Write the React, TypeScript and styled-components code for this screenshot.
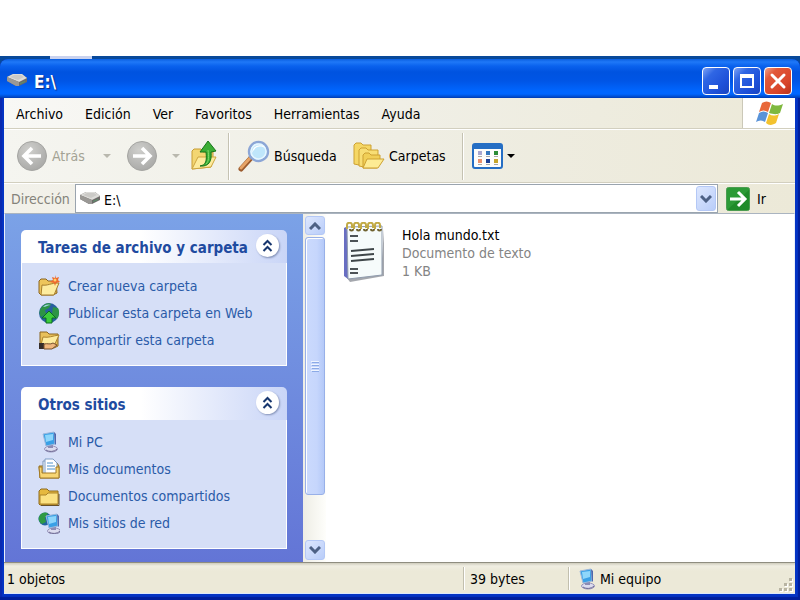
import React from "react";
import styled, { createGlobalStyle } from "styled-components";

const GlobalStyle = createGlobalStyle`
  * { box-sizing: border-box; }
  html, body { margin: 0; padding: 0; background: #fff; }
  body, button, input {
    font-family: "DejaVu Sans Condensed", "DejaVu Sans", sans-serif;
    font-size: 14px;
    line-height: 18px;
    color: #000;
  }
  button { border: 0; padding: 0; margin: 0; background: none; cursor: default; }
  svg { display: block; flex: none; }
`;

/* ---------- desktop and window frame ---------- */

const Page = styled.div`
  display: flex;
  flex-direction: column;
  min-height: 100vh;
  padding-top: 56px;
`;

const Desktop = styled.div`
  display: flex;
  flex-direction: column;
  flex: 1;
  background: #08499a;
`;

const DesktopEdge = styled.div`
  display: flex;
  height: 3px;
  padding-left: 50px;
`;

const BackgroundTab = styled.div`
  width: 42px;
  background: #c9d2ef;
`;

const Window = styled.section`
  display: flex;
  flex-direction: column;
  flex: 1;
  padding: 0 5px 6px 4px;
  border-radius: 8px 8px 0 0;
  background: #0434c4;
  box-shadow: inset -2px -3px 1px #001f9c, inset 2px 0 1px #0a2ab0;
`;

const TitleBar = styled.header`
  display: flex;
  align-items: center;
  gap: 3px;
  height: 39px;
  margin: 0 -5px 0 -4px;
  padding: 4px 8px 0 6px;
  border-radius: 8px 8px 0 0;
  background: linear-gradient(
    #0a5fe0 0, #1f78f8 3px, #0a62ee 7px, #0053e0 13px, #0055e6 22px,
    #0066ff 32px, #0066ff 35px, #0049c8 38px, #0038b0 39px
  );
`;

const Title = styled.h1`
  flex: 1;
  margin: 0;
  padding: 2px 0 0 3px;
  font-size: 17px;
  line-height: 20px;
  font-weight: bold;
  color: #fff;
  text-shadow: 1px 1px 1px #0a2a80;
`;

const CaptionButtons = styled.div`
  display: flex;
  gap: 3px;
`;

const CaptionButton = styled.button<{ $danger?: boolean }>`
  display: grid;
  place-items: center;
  width: 28px;
  height: 28px;
  border: 1px solid #fff;
  border-radius: 4px;
  background: ${(p) =>
    p.$danger
      ? "linear-gradient(135deg, #f0a088 0, #e2593a 25%, #d8452a 70%, #b8321c 100%)"
      : "linear-gradient(135deg, #7fa4f6 0, #2f66e4 28%, #1e50d8 70%, #1a44c0 100%)"};
`;

/* ---------- menu bar ---------- */

const MenuBar = styled.div`
  display: flex;
  height: 31px;
  background: linear-gradient(90deg, #f8f8f5 0, #f0efe6 50%, #ece9d8 100%);
  border-bottom: 1px solid #d2cfbf;
`;

const Menus = styled.nav`
  display: flex;
  flex: 1;
  align-items: center;
  gap: 22px;
  padding: 1px 0 0 12px;
`;

const LogoBox = styled.div`
  display: grid;
  place-items: center;
  width: 53px;
  padding-left: 2px;
  background: #fff;
  border-left: 1px solid #cbc8b8;
`;

/* ---------- toolbar ---------- */

const Toolbar = styled.div`
  display: flex;
  align-items: center;
  height: 54px;
  padding-left: 12px;
  border-top: 1px solid #fff;
  border-bottom: 1px solid #d2cfbf;
  background: linear-gradient(90deg, #f5f5f0 0, #efeee4 50%, #ece9d8 100%);
`;

const ToolButton = styled.button<{ $muted?: boolean; $width: number }>`
  display: flex;
  align-items: center;
  gap: 4px;
  width: ${(p) => p.$width}px;
  flex: none;
  color: ${(p) => (p.$muted ? "#a3a294" : "#000")};
`;

const Spacer = styled.span`
  flex: 1;
`;

const Divider = styled.div`
  width: 2px;
  height: 47px;
  margin-right: 8px;
  background: #c5c2b2;
  border-right: 1px solid #fff;
`;

/* ---------- address bar ---------- */

const AddressBar = styled.form`
  display: flex;
  align-items: center;
  height: 30px;
  border-top: 1px solid #fff;
  background: linear-gradient(90deg, #f2f1ea 0, #ece9d8 100%);
`;

const AddressLabel = styled.label`
  width: 71px;
  padding-left: 7px;
  color: #84837a;
`;

const AddressField = styled.div`
  display: flex;
  align-items: center;
  flex: 1;
  height: 29px;
  padding: 0 1px 0 3px;
  gap: 3px;
  border: 1px solid #9aa4ae;
  background: #fff;
`;

const AddressInput = styled.input`
  flex: 1;
  min-width: 0;
  padding: 2px 0 0;
  border: 0;
  outline: 0;
  background: transparent;
`;

const ScrollKey = styled.button<{ $height: number }>`
  display: grid;
  place-items: center;
  flex: none;
  width: 20px;
  height: ${(p) => p.$height}px;
  border: 1px solid #b4c8f6;
  border-radius: 3px;
  background: linear-gradient(135deg, #dde7fe, #b9cdf9);
`;

const GoButton = styled.button`
  display: flex;
  align-items: center;
  gap: 7px;
  width: 77px;
  padding-left: 8px;
`;

/* ---------- body ---------- */

const Body = styled.div`
  display: flex;
  flex: 1;
  background: #fff;
  border-left: 1px solid #e9effa;
  border-right: 1px solid #e9effa;
  border-top: 1px solid #aab4c0;
`;

const TaskPane = styled.aside`
  display: flex;
  flex-direction: column;
  gap: 21px;
  width: 298px;
  padding: 16px 16px 13px;
  background: linear-gradient(#7ba2e7, #6375d6);
`;

const TaskBox = styled.section`
  color: #215dc6;
`;

const TaskHeader = styled.header`
  display: flex;
  align-items: center;
  justify-content: space-between;
  height: 33px;
  padding: 0 8px 2px 17px;
  border-radius: 5px 5px 0 0;
  background: linear-gradient(90deg, #fff 0, #fff 45%, #c9d5f7 100%);
`;

const TaskTitle = styled.h2`
  margin: 0;
  padding-top: 5px;
  font-size: 15px;
  line-height: 18px;
  white-space: nowrap;
  color: #1f4ba0;
`;

const CollapseButton = styled.button`
  display: grid;
  place-items: center;
  width: 23px;
  height: 23px;
  border-radius: 50%;
  background: #fff;
  box-shadow: 1px 1px 2px #8593b8;
`;

const TaskList = styled.ul<{ $tall?: boolean }>`
  margin: 0;
  padding: ${(p) => (p.$tall ? "8px 16px 12px" : "9px 16px 12px")};
  list-style: none;
  background: #d6dff7;
  border: 1px solid #fff;
  border-top: 0;
`;

const TaskLink = styled.a`
  display: flex;
  align-items: center;
  gap: 8px;
  height: 27px;
  color: #2a5ba8;
  text-decoration: none;
  white-space: nowrap;
`;

const ScrollBar = styled.div`
  display: flex;
  flex-direction: column;
  align-items: center;
  width: 23px;
  padding: 2px 1px;
  background: linear-gradient(90deg, #eeede5, #fefefb);
`;

const ScrollTrack = styled.div`
  display: flex;
  flex: 1;
  flex-direction: column;
  padding: 2px 0 45px;
`;

const ScrollThumb = styled.div`
  display: grid;
  place-items: center;
  flex: 1;
  width: 20px;
  border: 1px solid #98b0e8;
  border-radius: 3px;
  background: linear-gradient(90deg, #cbdafd, #c6d6fc 60%, #b4c9f8);
  box-shadow: inset 1px 1px 0 #fff;
`;

const FileArea = styled.main`
  flex: 1;
  padding: 8px 17px;
`;

const FileItem = styled.a`
  display: inline-flex;
  gap: 17px;
  color: #000;
  text-decoration: none;
`;

const FileText = styled.span`
  display: flex;
  flex-direction: column;
  padding-top: 4px;
  line-height: 18px;
`;

const FileMeta = styled.span`
  color: #848484;
`;

/* ---------- status bar ---------- */

const StatusBar = styled.footer`
  display: flex;
  align-items: center;
  height: 32px;
  background: linear-gradient(#cfccbd 0, #f0eee2 3px, #ece9d8 8px, #ece9d8 100%);
  border-top: 1px solid #8f8d80;
  border-bottom: 1px solid #dce8fa;
`;

const StatusCell = styled.div<{ $width?: number }>`
  display: flex;
  align-items: center;
  gap: 3px;
  flex: ${(p) => (p.$width ? "none" : "1")};
  width: ${(p) => (p.$width ? `${p.$width}px` : "auto")};
  height: 24px;
  padding: 2px 0 0 3px;
`;

const StatusSplit = styled.div`
  width: 2px;
  height: 23px;
  margin-right: 2px;
  background: #c2bfae;
  border-right: 1px solid #fff;
`;

const Grip = styled.div`
  display: flex;
  align-self: flex-end;
  padding: 0 2px 1px 0;
`;

/* ---------- icons ---------- */

const DriveIcon = () => (
  <svg width="22" height="18" viewBox="0 0 22 18">
    <path d="M1 5 7 2h9l5 4v4l-8 4h-3L1 9z" fill="#6d6b69" />
    <path d="M1 5 7 2h9l5 4-8 4z" fill="#dddcd9" />
    <path d="m4 5 4-2h7l3 2-6 3z" fill="#cbcac7" />
    <path d="m1 5 12 5v4h-3L1 9z" fill="#9a9895" />
    <path d="m14 11 5-2v1l-5 2z" fill="#5b946c" />
  </svg>
);

const MinimizeIcon = () => (
  <svg width="22" height="22"><path d="M4 15h9v4H4z" fill="#fff" /></svg>
);
const MaximizeIcon = () => (
  <svg width="22" height="22">
    <path d="M4 4h14v14H4zM6 8v8h10V8z" fillRule="evenodd" fill="#fff" />
  </svg>
);
const CloseIcon = () => (
  <svg width="20" height="20"><path d="m4 4 12 12M16 4 4 16" stroke="#fff" strokeWidth="3" strokeLinecap="round" /></svg>
);

const WindowsFlag = () => (
  <svg width="28" height="27" viewBox="0 0 28 27">
    <path d="M6 3c3-2 6-2 9 0l-3 9c-3-2-6-2-9 0z" fill="#e8683a" />
    <path d="M16 4c3 2 6 2 11 0l-3 9c-4 2-7 1-11 0z" fill="#7fb83e" />
    <path d="M3 13c3-2 6-2 9 0l-3 9c-3-2-6-2-9 0z" fill="#5a93d8" />
    <path d="M13 14c3 2 6 2 10 0l-3 9c-3 2-7 3-10 0z" fill="#f3c22e" />
  </svg>
);

const RoundArrow = ({ flip }: { flip?: boolean }) => (
  <svg width="32" height="32" viewBox="0 0 32 32">
    <defs>
      <radialGradient id={flip ? "fw" : "bk"} cx=".4" cy=".3" r=".75">
        <stop offset="0" stopColor="#cfcfcc" />
        <stop offset="1" stopColor="#a8a8a6" />
      </radialGradient>
    </defs>
    <circle cx="16" cy="16" r="14.5" fill={flip ? "url(#fw)" : "url(#bk)"} stroke="#a5a5a2" />
    <g transform={flip ? "translate(32 0) scale(-1 1)" : undefined}>
      <path d="M25 16H9M16 8l-8 8 8 8" fill="none" stroke="#fff" strokeWidth="3.6" />
    </g>
  </svg>
);

const Caret = ({ color }: { color: string }) => (
  <svg width="8" height="4"><path d="M0 0h8L4 4z" fill={color} /></svg>
);

const UpFolderIcon = () => (
  <svg width="28" height="32" viewBox="0 0 28 32">
    <path d="M2 29V11l2-2h7l2 3h10v6l-2 9z" fill="#f3d672" stroke="#c79c33" />
    <path d="m2 29 6-12h18l-5 10z" fill="#fdeb9c" stroke="#cda540" />
    <path d="M10 26c6-1 7-5 6-14h-6l8-11 8 10-5 1c1 9-2 15-11 14z" fill="#3bad35" stroke="#17751a" />
    <path d="M18 10c1 7 1 11-2 14" stroke="#83d96c" fill="none" />
  </svg>
);

const SearchIcon = () => (
  <svg width="32" height="32" viewBox="0 0 32 32">
    <path d="m3 29 10-11" stroke="#9b5a2c" strokeWidth="5" strokeLinecap="round" />
    <path d="m3 28 10-11" stroke="#e6a467" strokeWidth="3" strokeLinecap="round" />
    <path d="m12 18 2-2" stroke="#7a8dac" strokeWidth="4" />
    <circle cx="20.500" cy="11.500" r="9.500" fill="#bfe6fb" stroke="#8ca6d6" strokeWidth="2.400" />
    <circle cx="20.500" cy="11.500" r="7.500" fill="none" stroke="#e6f6ff" strokeWidth="1.500" />
    <path d="M14 13c3-6 7-8 13-5-1-4-12-5-13 5" fill="#fff" />
  </svg>
);

const FoldersIcon = () => (
  <svg width="32" height="28" viewBox="0 0 32 28" stroke="#cda132">
    <path d="M1 22V3l2-2h5l2 2h8v8L6 23z" fill="#f5d765" />
    <path d="M6 24V8l2-2h5l2 2h10v8L11 25z" fill="#f8de74" />
    <path d="M10 26V13l2-2h4l2 2h9v5l-3 8z" fill="#f1cf57" />
    <path d="m10 26 4-9h17l-6 9z" fill="#fdec94" />
  </svg>
);

const ViewsIcon = () => (
  <svg width="31" height="26" viewBox="0 0 31 26">
    <rect x="1" y="1" width="29" height="24" rx="2" fill="#fdfdfb" stroke="#256ec4" strokeWidth="2" />
    <path d="M1 1h29v5H1z" fill="#256ec4" />
    {[
      [6, 8, "#a9a8d0"], [14, 8, "#3577bd"], [22, 8, "#2c8c34"],
      [6, 16, "#ea8f6a"], [14, 16, "#1a3f96"], [22, 16, "#c6a62c"],
    ].map(([x, y, c]) => (
      <g key={`${x}-${y}`}>
        <rect x={x} y={y} width="4" height="4" fill={c as string} />
        <rect x={x} y={Number(y) + 5} width="4" height="1" fill="#a7a7a7" />
      </g>
    ))}
  </svg>
);

const Chevron = ({ up }: { up?: boolean }) => (
  <svg width="12" height="8" viewBox="0 0 12 8">
    <path d={up ? "m1 7 5-5 5 5" : "m1 1 5 5 5-5"} fill="none" stroke="#4d6185" strokeWidth="3" />
  </svg>
);

const GoIcon = () => (
  <svg width="24" height="24" viewBox="0 0 24 24">
    <rect x=".5" y=".5" width="23" height="23" rx="2" fill="#2c9a36" stroke="#4b9c50" />
    <path d="M1 23h22V3z" fill="#178222" opacity=".6" />
    <path d="M4 12h14M12 5l7 7-7 7" fill="none" stroke="#fff" strokeWidth="3" />
  </svg>
);

const DoubleChevron = () => (
  <svg width="11" height="13" viewBox="0 0 11 13">
    <path d="m1.500 6 4-4 4 4M1.500 12l4-4 4 4" fill="none" stroke="#17366e" strokeWidth="2" />
  </svg>
);

const FolderShape = () => (
  <>
    <path d="M1 19V6l2-2h6l2 2h9v13l-2 1H2z" fill="#e5b83f" stroke="#8f6a1c" />
    <path d="M2 10h6l2-2h10v11H2z" fill="#fbe182" stroke="#ac8329" />
    <path d="M3 20.500h18V9" fill="none" stroke="#66502b" />
  </>
);

const NewFolderIcon = () => (
  <svg width="22" height="22" viewBox="0 0 22 22">
    <path d="M1 18V6l2-2h5l2 2h8l1 12-4 2H3z" fill="#edc55b" stroke="#8b6420" />
    <path d="m3 20 1-10c6 1 8-2 17-2l-5 12z" fill="#fdec9f" stroke="#a77e2c" />
    <path d="m17 0 1 3 3-1-1 3 2 2-4 1-1 3-1-3-4-1 3-2-1-3 3 1z" fill="#ee6a2d" />
    <circle cx="17" cy="5" r="1.500" fill="#ffcf6a" />
  </svg>
);

const PublishIcon = () => (
  <svg width="22" height="22" viewBox="0 0 22 22">
    <circle cx="11" cy="11" r="10" fill="#285f9f" />
    <path d="M3 6c3-4 7-6 10-4l-2 4-4 2 1 4-5 3c-2-3-2-6 0-9zM15 5l5 1c2 4 1 8-1 11l-5-5z" fill="#2c9445" />
    <path d="M5 5c2-3 6-3 8-2-3 0-5 2-8 2z" fill="#9ed1df" />
    <path d="m11 9 7 7h-4v5H8v-5H4z" fill="#3dcc3c" stroke="#0b6e1e" />
  </svg>
);

const ShareFolderIcon = () => (
  <svg width="22" height="22" viewBox="0 0 22 22">
    <path d="M2 18V3h7l2 2h9v12l-4 2z" fill="#e8c05a" stroke="#8b6420" />
    <path d="m3 16 2-8c6 1 9-1 16-2l-5 11z" fill="#fdeb9d" stroke="#ad842d" />
    <path d="M1 14h5v6H1z" fill="#342c2a" />
    <path d="M6 15c4-1 6 1 9-1l4 2-5 4H6z" fill="#efb67d" stroke="#76502d" />
  </svg>
);

const ComputerShape = () => (
  <>
    <ellipse cx="13" cy="18" rx="6.500" ry="3" fill="#dcdcef" stroke="#9894ba" />
    <path d="M8 19c3 2 8 2 11-1" fill="none" stroke="#6b6792" />
    <path d="M10 13h5v4h-5z" fill="#8c8cb4" />
    <path d="m5 3 11-2 1 12-9 2z" fill="#39a0e6" stroke="#9db8dc" />
    <path d="m7 4 8-1v6l-7 2z" fill="#8ed6fb" />
    <path d="m16 1 2 2v10l-1 1z" fill="#4f68ac" />
  </>
);

const ComputerIcon = () => (
  <svg width="22" height="22" viewBox="0 0 22 22"><ComputerShape /></svg>
);

const DocumentsIcon = () => (
  <svg width="22" height="22" viewBox="0 0 22 22">
    <path d="M1 8h4l2-3h12l2 3v12H2z" fill="#e6bd4c" stroke="#8f6a1c" />
    <path d="M5 3h9l4 4v10H5z" fill="#f6fbff" stroke="#7f97b8" />
    <path d="M7 1h8l4 4v11H7z" fill="#fff" stroke="#7f9cc4" />
    <path d="M9 5h6M9 8h8M9 11h8" stroke="#4f92cc" />
    <path d="M1 9h3v6h14V9h3v11H2z" fill="#f7d573" stroke="#a37a26" />
  </svg>
);

const SharedDocsIcon = () => (
  <svg width="22" height="22" viewBox="0 0 22 22"><FolderShape /></svg>
);

const NetworkIcon = () => (
  <svg width="22" height="22" viewBox="0 0 22 22">
    <circle cx="7" cy="7" r="6.500" fill="#2262a0" />
    <path d="M2 3c2-3 6-3 8-2L7 6l1 4-4 2C0 9 0 6 2 3z" fill="#2f9a45" />
    <g transform="translate(3 1)"><ComputerShape /></g>
  </svg>
);

const NotepadIcon = () => (
  <svg width="42" height="60" viewBox="0 0 42 60">
    <path d="M4 56 38 51l3-44v47L7 60z" fill="#8d9199" opacity=".8" />
    <path d="m1 6 4-2v53l-4-3z" fill="#686ec2" />
    <path d="m4 5 35-1v49L5 57z" fill="#f6fbfb" stroke="#8f9bad" />
    <path d="M7 14h8M7 19h8M7 47h8M7 51h8" stroke="#4d5356" strokeWidth="2" />
    <path d="m8 29 23-2M8 34l23-2M8 39l23-2" stroke="#3f4649" strokeWidth="2" />
    {[4, 11, 18, 25, 32].map((x) => (
      <g key={x}>
        <path d={`M${x} 7V3c0-3 5-3 5 0v3`} fill="none" stroke="#c1aa46" strokeWidth="2" />
        <path d={`M${x + 3} 7c0 2 3 2 3 0`} fill="none" stroke="#6f6230" strokeWidth="2" />
      </g>
    ))}
  </svg>
);

const ThumbGrip = () => (
  <svg width="8" height="12"><path d="M0 1.500h8M0 4.500h8M0 7.500h8M0 10.500h8" stroke="#eef4fe" /><path d="M1 2.500h8M1 5.500h8M1 8.500h8M1 11.500h8" stroke="#8caae6" /></svg>
);

const ResizeGrip = () => (
  <svg width="14" height="14">
    {[[10, 0], [10, 5], [10, 10], [5, 5], [5, 10], [0, 10]].map(([x, y]) => (
      <g key={`${x}-${y}`}>
        <rect x={x + 1} y={y + 1} width="3" height="3" fill="#fff" />
        <rect x={x} y={y} width="3" height="3" fill="#b8b4a2" />
      </g>
    ))}
  </svg>
);

/* ---------- content ---------- */

const menus = ["Archivo", "Edición", "Ver", "Favoritos", "Herramientas", "Ayuda"];

const groups = [
  {
    title: "Tareas de archivo y carpeta",
    items: [
      { label: "Crear nueva carpeta", Icon: NewFolderIcon },
      { label: "Publicar esta carpeta en Web", Icon: PublishIcon },
      { label: "Compartir esta carpeta", Icon: ShareFolderIcon },
    ],
  },
  {
    title: "Otros sitios",
    items: [
      { label: "Mi PC", Icon: ComputerIcon },
      { label: "Mis documentos", Icon: DocumentsIcon },
      { label: "Documentos compartidos", Icon: SharedDocsIcon },
      { label: "Mis sitios de red", Icon: NetworkIcon },
    ],
  },
];

export default function App() {
  return (
    <Page>
      <GlobalStyle />
      <Desktop>
        <DesktopEdge><BackgroundTab /></DesktopEdge>
        <Window>
          <TitleBar>
            <DriveIcon />
            <Title>E:\</Title>
            <CaptionButtons>
              <CaptionButton aria-label="Minimizar"><MinimizeIcon /></CaptionButton>
              <CaptionButton aria-label="Maximizar"><MaximizeIcon /></CaptionButton>
              <CaptionButton aria-label="Cerrar" $danger><CloseIcon /></CaptionButton>
            </CaptionButtons>
          </TitleBar>

          <MenuBar>
            <Menus>
              {menus.map((m) => <button key={m}>{m}</button>)}
            </Menus>
            <LogoBox><WindowsFlag /></LogoBox>
          </MenuBar>

          <Toolbar>
            <ToolButton $width={110} $muted>
              <RoundArrow />Atrás<Spacer /><Caret color="#b9b8ae" /><Spacer />
            </ToolButton>
            <ToolButton $width={64} $muted aria-label="Adelante">
              <RoundArrow flip /><Spacer /><Caret color="#b9b8ae" /><Spacer />
            </ToolButton>
            <ToolButton $width={38} aria-label="Arriba"><UpFolderIcon /></ToolButton>
            <Divider />
            <ToolButton $width={115}><SearchIcon />Búsqueda</ToolButton>
            <ToolButton $width={109}><FoldersIcon />Carpetas</ToolButton>
            <Divider />
            <ToolButton $width={48} aria-label="Vistas"><ViewsIcon /><Caret color="#000" /></ToolButton>
          </Toolbar>

          <AddressBar onSubmit={(e) => e.preventDefault()}>
            <AddressLabel htmlFor="address">Dirección</AddressLabel>
            <AddressField>
              <DriveIcon />
              <AddressInput id="address" defaultValue="E:\" />
              <ScrollKey type="button" $height={25} aria-label="Mostrar direcciones"><Chevron /></ScrollKey>
            </AddressField>
            <GoButton type="submit"><GoIcon />Ir</GoButton>
          </AddressBar>

          <Body>
            <TaskPane>
              {groups.map((g) => (
                <TaskBox key={g.title}>
                  <TaskHeader>
                    <TaskTitle>{g.title}</TaskTitle>
                    <CollapseButton aria-label={`Contraer ${g.title}`}><DoubleChevron /></CollapseButton>
                  </TaskHeader>
                  <TaskList $tall={g.items.length > 3}>
                    {g.items.map(({ label, Icon }) => (
                      <li key={label}><TaskLink href="#"><Icon />{label}</TaskLink></li>
                    ))}
                  </TaskList>
                </TaskBox>
              ))}
            </TaskPane>
            <ScrollBar>
              <ScrollKey $height={19} aria-label="Subir"><Chevron up /></ScrollKey>
              <ScrollTrack><ScrollThumb><ThumbGrip /></ScrollThumb></ScrollTrack>
              <ScrollKey $height={20} aria-label="Bajar"><Chevron /></ScrollKey>
            </ScrollBar>
            <FileArea>
              <FileItem href="#">
                <NotepadIcon />
                <FileText>
                  <span>Hola mundo.txt</span>
                  <FileMeta>Documento de texto</FileMeta>
                  <FileMeta>1 KB</FileMeta>
                </FileText>
              </FileItem>
            </FileArea>
          </Body>

          <StatusBar>
            <StatusCell>1 objetos</StatusCell>
            <StatusSplit />
            <StatusCell $width={101}>39 bytes</StatusCell>
            <StatusSplit />
            <StatusCell $width={207}><ComputerIcon />Mi equipo</StatusCell>
            <Grip><ResizeGrip /></Grip>
          </StatusBar>
        </Window>
      </Desktop>
    </Page>
  );
}
